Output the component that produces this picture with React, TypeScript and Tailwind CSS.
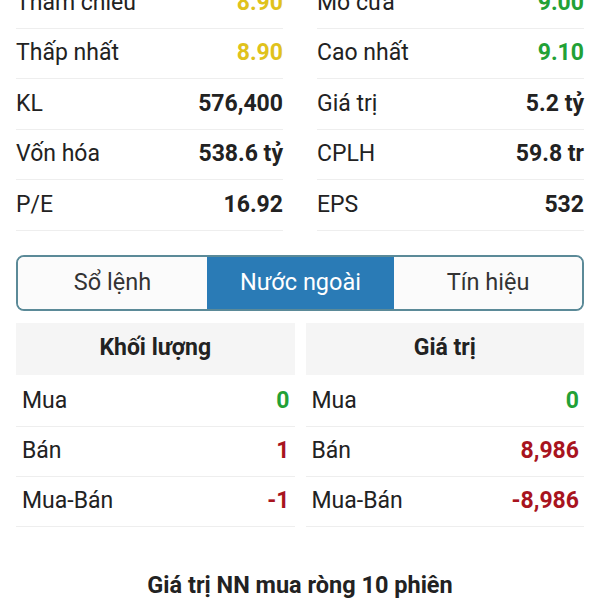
import React from 'react'

type Stat = { label: string; value: string; color?: string }

const leftStats: Stat[] = [
    { label: 'Tham chiếu', value: '8.90', color: 'text-[#e0c21c]' },
    { label: 'Thấp nhất', value: '8.90', color: 'text-[#e0c21c]' },
    { label: 'KL', value: '576,400' },
    { label: 'Vốn hóa', value: '538.6 tỷ' },
    { label: 'P/E', value: '16.92' },
]

const rightStats: Stat[] = [
    { label: 'Mở cửa', value: '9.00', color: 'text-[#22a136]' },
    { label: 'Cao nhất', value: '9.10', color: 'text-[#22a136]' },
    { label: 'Giá trị', value: '5.2 tỷ' },
    { label: 'CPLH', value: '59.8 tr' },
    { label: 'EPS', value: '532' },
]

const volumeRows: Stat[] = [
    { label: 'Mua', value: '0', color: 'text-[#22a136]' },
    { label: 'Bán', value: '1', color: 'text-[#a8141e]' },
    { label: 'Mua-Bán', value: '-1', color: 'text-[#a8141e]' },
]

const valueRows: Stat[] = [
    { label: 'Mua', value: '0', color: 'text-[#22a136]' },
    { label: 'Bán', value: '8,986', color: 'text-[#a8141e]' },
    { label: 'Mua-Bán', value: '-8,986', color: 'text-[#a8141e]' },
]

const StatColumn = ({ items }: { items: Stat[] }) => (
    <div className="flex flex-col">
        {items.map((s) => (
            <div key={s.label} className="h-[50.5px] flex items-center justify-between border-b border-[#eeeeee]">
                <span className="text-[23px] text-[#222]">{s.label}</span>
                <span className={`text-[23px] font-bold ${s.color ?? 'text-[#222]'}`}>{s.value}</span>
            </div>
        ))}
    </div>
)

const ForeignTable = ({ title, rows }: { title: string; rows: Stat[] }) => (
    <div className="flex flex-col">
        <div className="h-[52px] bg-[#f5f5f5] flex items-center justify-center text-[23px] font-bold text-[#222]">
            {title}
        </div>
        <div className="flex flex-col mt-[2px]">
            {rows.map((r) => (
                <div key={r.label} className="h-[50px] flex items-center justify-between pl-[6px] pr-[5px] border-b border-[#eeeeee]">
                    <span className="text-[23px] text-[#222]">{r.label}</span>
                    <span className={`text-[23px] font-bold ${r.color}`}>{r.value}</span>
                </div>
            ))}
        </div>
    </div>
)

const tabs = ['Sổ lệnh', 'Nước ngoài', 'Tín hiệu']

export default function App() {
    return (
        <div className="w-[600px] h-[600px] overflow-hidden bg-white font-['Roboto',sans-serif]">
            <div className="px-4 -mt-[22px] grid grid-cols-2 gap-x-[34px]">
                <StatColumn items={leftStats} />
                <StatColumn items={rightStats} />
            </div>

            {/* tabs */}
            <div className="mx-4 mt-[24px] h-[56px] border-2 border-[#5b8a98] rounded-[8px] overflow-hidden grid grid-cols-[189px_187px_1fr]">
                {tabs.map((t, i) => (
                    <div
                        key={t}
                        className={
                            i === 1
                                ? 'flex items-center justify-center bg-[#2a7bb6] text-white text-[23.5px]'
                                : 'flex items-center justify-center bg-[#fbfbfb] text-[#333] text-[23.5px]'
                        }
                    >
                        {t}
                    </div>
                ))}
            </div>

            <div className="px-4 mt-[12px] grid grid-cols-2 gap-x-[11px]">
                <ForeignTable title="Khối lượng" rows={volumeRows} />
                <ForeignTable title="Giá trị" rows={valueRows} />
            </div>

            <div className="mt-[41px] text-center text-[23.5px] font-bold text-[#222]">
                Giá trị NN mua ròng 10 phiên
            </div>
        </div>
    )
}
